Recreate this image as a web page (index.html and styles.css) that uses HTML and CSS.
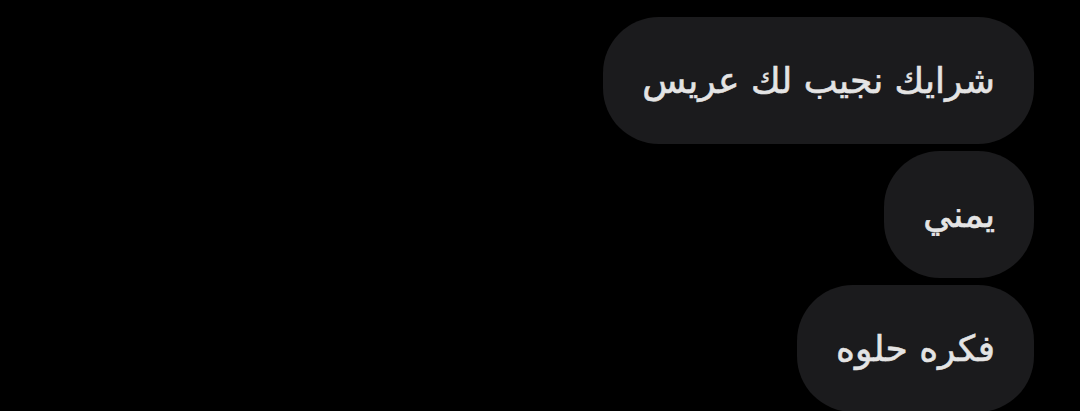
FILE: index.html
```html
<!DOCTYPE html>
<html lang="ar" dir="rtl">
<head>
    <meta charset="UTF-8">
    <meta name="viewport" content="width=device-width, initial-scale=1.0">
    <title>Chat</title>
    <link rel="stylesheet" href="styles.css">
</head>
<body>
    <div class="chat">
        <div class="bubble">شرايك نجيب لك عريس</div>
        <div class="bubble">يمني</div>
        <div class="bubble">فكره حلوه</div>
    </div>
</body>
</html>
```

FILE: styles.css
```css
body {
    margin: 0;
    background-color: #000;
    font-family: 'DejaVu Sans', sans-serif;
    color: #e4e4e4;
    height: 411px;
    overflow: hidden;
}
.chat {
    display: flex;
    flex-direction: column;
    align-items: flex-start;
    gap: 7px;
    padding: 17px 46px 0 0;
}
.bubble {
    background-color: #1b1b1d;
    border-radius: 56px;
    padding: 40px 39px;
    font-size: 36px;
    line-height: 47px;
    -webkit-text-stroke: 0.6px #e4e4e4;
    white-space: nowrap;
}
```
